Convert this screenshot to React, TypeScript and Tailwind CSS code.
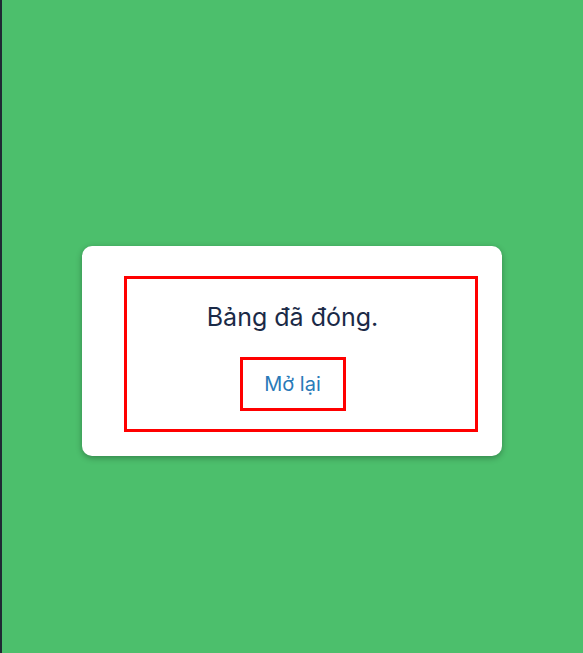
import React from "react";

export default function App() {
  return (
    <div className="flex h-[653px] w-[583px] overflow-hidden" style={{ fontFamily: "Inter, 'Noto Sans', sans-serif" }}>
      <div className="w-[2px] bg-[#1f2a33]" />
      <div className="flex-1 bg-[#4cbf6c] pt-[246px] pl-[80px]">
        <div className="w-[420px] h-[210px] rounded-[10px] bg-white shadow-[0_2px_6px_rgba(0,0,0,0.3)] pl-[42px] pt-[30px]">
          <div className="w-[354px] h-[156px] border-[3px] border-[#ff0000] flex flex-col items-center pr-[17px]">
            <div className="mt-[22px] text-[25px] leading-[32px] text-[#1b2a47]">Bảng đã đóng.</div>
            <div className="mt-[24px] w-[106px] h-[54px] border-[3px] border-[#ff0000] flex items-center justify-center text-[20px] text-[#2a7ab8]">
              Mở lại
            </div>
          </div>
        </div>
      </div>
    </div>
  );
}
